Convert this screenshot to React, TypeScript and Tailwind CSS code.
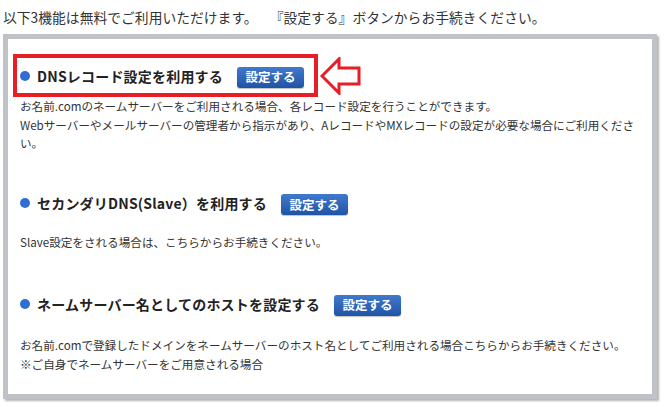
import React from "react";

const font = { fontFamily: '"Noto Sans CJK JP", "Noto Sans", sans-serif' };

function Btn() {
  return (
    <span className="inline-flex h-[21px] w-[67px] items-center justify-center rounded-[3px] bg-gradient-to-b from-[#4179cc] to-[#1f54a5] text-[12.5px] font-bold leading-none text-white shadow-[0_1px_1px_rgba(0,0,0,0.25)]">
      設定する
    </span>
  );
}

function Heading({ children }: { children: React.ReactNode }) {
  return (
    <div className="flex h-[21px] items-center">
      <span className="h-[10px] w-[10px] rounded-full bg-[#2f6fd3]" />
      <span className="ml-[7px] text-[14px] font-bold leading-none tracking-[0.2px] text-[#222]">{children}</span>
      <span className="ml-[14px]">
        <Btn />
      </span>
    </div>
  );
}

function Arrow() {
  return (
    <svg width="42" height="38" viewBox="0 0 42 38" className="ml-[2px]">
      <polygon
        points="2,19 19,2 19,11 39,11 39,27 19,27 19,36"
        fill="none"
        stroke="#e81d25"
        strokeWidth="3"
        strokeLinejoin="miter"
      />
    </svg>
  );
}

export default function App() {
  return (
    <div className="min-h-[413px] w-[665px] bg-white px-[3px] pt-[7px]" style={font}>
      <p className="text-[13.8px] leading-[20px] text-[#333]">
        以下3機能は無料でご利用いただけます。
        <span className="inline-block w-[12px]" />
        『設定する』ボタンからお手続きください。
      </p>
      <div className="mt-[7px] h-[365px] w-[654px] border-[5px] border-[#bfc3c7] bg-white pl-[12px] pt-[15px] shadow-[2px_2px_2px_rgba(0,0,0,0.3)]">
        <div className="flex items-center">
          <div className="-ml-[7px] w-fit border-4 border-[#e81d25] py-[7px] pl-[3px] pr-[10px]">
            <Heading>DNSレコード設定を利用する</Heading>
          </div>
          <Arrow />
        </div>
        <p className="text-[11.6px] leading-[18.5px] text-[#333]">
          お名前.comのネームサーバーをご利用される場合、各レコード設定を行うことができます。
          <br />
          Webサーバーやメールサーバーの管理者から指示があり、AレコードやMXレコードの設定が必要な場合にご利用くださ
          <br />
          い。
        </p>

        <div className="mt-[40px]">
          <Heading>セカンダリDNS(Slave）を利用する</Heading>
        </div>
        <p className="mt-[19px] text-[11.6px] leading-[18.5px] text-[#333]">
          Slave設定をされる場合は、こちらからお手続きください。
        </p>

        <div className="mt-[42px]">
          <Heading>ネームサーバー名としてのホストを設定する</Heading>
        </div>
        <p className="mt-[22px] text-[11.6px] leading-[18.5px] text-[#333]">
          お名前.comで登録したドメインをネームサーバーのホスト名としてご利用される場合こちらからお手続きください。
          <br />
          ※ご自身でネームサーバーをご用意される場合
        </p>
      </div>
    </div>
  );
}
